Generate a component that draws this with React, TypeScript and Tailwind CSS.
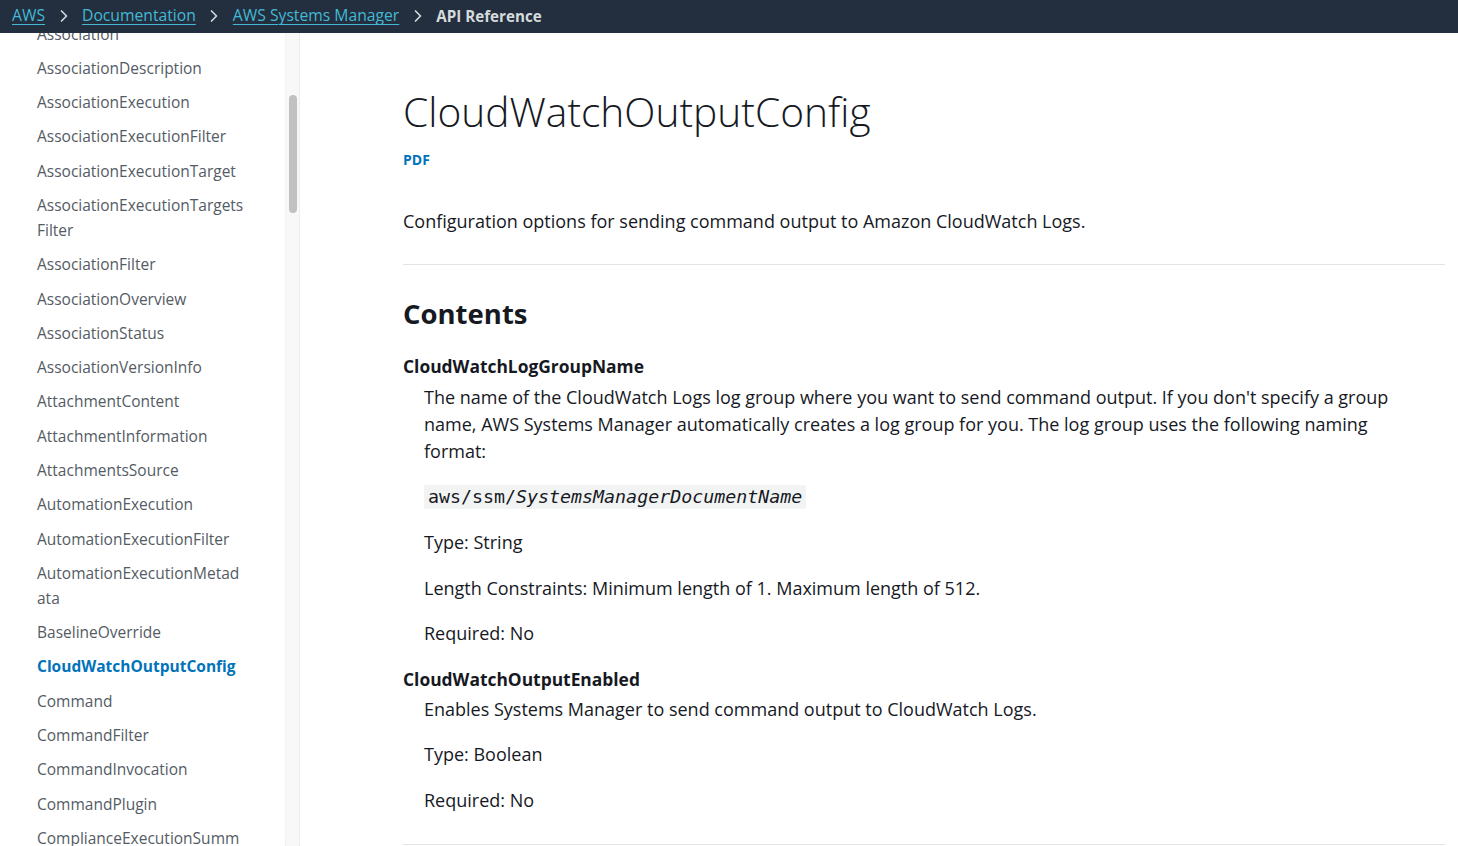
import { ChevronRight } from 'lucide-react';

const navItems: { label: React.ReactNode; active?: boolean }[] = [
  { label: 'AssociationDescription' },
  { label: 'AssociationExecution' },
  { label: 'AssociationExecutionFilter' },
  { label: 'AssociationExecutionTarget' },
  { label: <>AssociationExecutionTargets<br />Filter</> },
  { label: 'AssociationFilter' },
  { label: 'AssociationOverview' },
  { label: 'AssociationStatus' },
  { label: 'AssociationVersionInfo' },
  { label: 'AttachmentContent' },
  { label: 'AttachmentInformation' },
  { label: 'AttachmentsSource' },
  { label: 'AutomationExecution' },
  { label: 'AutomationExecutionFilter' },
  { label: <>AutomationExecutionMetad<br />ata</> },
  { label: 'BaselineOverride' },
  { label: 'CloudWatchOutputConfig', active: true },
  { label: 'Command' },
  { label: 'CommandFilter' },
  { label: 'CommandInvocation' },
  { label: 'CommandPlugin' },
  { label: 'ComplianceExecutionSumm' },
];

const crumbs = ['AWS', 'Documentation', 'AWS Systems Manager'];

function TopBar() {
  return (
    <header className="h-[33px] bg-[#232f3e] flex items-center pl-3 pb-[1px] text-[15.7px] shrink-0">
      {crumbs.map((c) => (
        <span key={c} className="flex items-center">
          <a className="text-[#44b9d6] underline underline-offset-[3px] decoration-1">{c}</a>
          <ChevronRight className="w-5 h-5 mx-[8.5px] text-[#d5dbdb]" strokeWidth={2} />
        </span>
      ))}
      <span className="font-bold text-[#d5dbdb] text-[15.2px]">API Reference</span>
    </header>
  );
}

function Sidebar() {
  return (
    <aside className="w-[300px] shrink-0 flex h-full overflow-hidden">
      <div className="flex-1 overflow-hidden">
        <ul className="pl-[37px] -mt-[16px] text-[15.5px] text-[#545b64]">
          <li className="leading-[25px] py-[4.65px]">Association</li>
          {navItems.map((item, i) => (
            <li
              key={i}
              className={
                item.active
                  ? 'leading-[25px] py-[4.65px] font-bold text-[#0073bb]'
                  : 'leading-[25px] py-[4.65px]'
              }
            >
              {item.label}
            </li>
          ))}
        </ul>
      </div>
      {/* scroll track */}
      <div className="w-[15px] bg-[#f8f8f8] border-l border-[#ececec] border-r border-r-[#e4e4e4] border-dotted">
        <div className="mt-[62px] mx-auto w-[8px] h-[118px] rounded-full bg-[#c1c1c1]" />
      </div>
    </aside>
  );
}

function Para({ children, className = '' }: { children: React.ReactNode; className?: string }) {
  return <p className={`leading-[27px] ${className}`}>{children}</p>;
}

export default function App() {
  return (
    <div
      className="w-[1458px] h-[846px] overflow-hidden flex flex-col bg-white"
      style={{ fontFamily: '"Open Sans", sans-serif' }}
    >
      <TopBar />
      <div className="flex flex-1 min-h-0">
        <Sidebar />
        <main className="flex-1 pl-[103px] pr-[13px] text-[#16191f] text-[18px]">
          <h1 className="mt-[53px] text-[40.7px] font-light leading-[50px]">CloudWatchOutputConfig</h1>
          <a className="block mt-[14px] text-[14px] font-bold text-[#0073bb] leading-[20px]">PDF</a>
          <Para className="mt-[38px]">
            Configuration options for sending command output to Amazon CloudWatch Logs.
          </Para>
          <hr className="mt-[29px] border-t border-[#e1e4e6]" />
          <h2 className="mt-[29px] text-[27.5px] font-bold leading-[40px]">Contents</h2>
          <dl className="mt-[19px]">
            <dt className="font-bold leading-[27px] text-[17.4px]">CloudWatchLogGroupName</dt>
            <dd className="pl-[21px] pr-[40px] mt-[4px]">
              <Para>
                The name of the CloudWatch Logs log group where you want to send command output. If you
                don't specify a group name, AWS Systems Manager automatically creates a log group for you.
                The log group uses the following naming format:
              </Para>
              <div className="mt-[20px] h-[24px] flex">
                <code
                  className="bg-[#f2f3f3] px-[4px] text-[18.3px] leading-[24px] rounded-[2px]"
                  style={{ fontFamily: '"DejaVu Sans Mono", monospace' }}
                >
                  aws/ssm/<i>SystemsManagerDocumentName</i>
                </code>
              </div>
              <Para className="mt-[19.5px]">Type: String</Para>
              <Para className="mt-[19px]">Length Constraints: Minimum length of 1. Maximum length of 512.</Para>
              <Para className="mt-[18px]">Required: No</Para>
            </dd>
            <dt className="mt-[19px] font-bold leading-[27px] text-[17.4px]">CloudWatchOutputEnabled</dt>
            <dd className="pl-[21px] pr-[40px] mt-[3px]">
              <Para>Enables Systems Manager to send command output to CloudWatch Logs.</Para>
              <Para className="mt-[18px]">Type: Boolean</Para>
              <Para className="mt-[19px]">Required: No</Para>
            </dd>
          </dl>
          <hr className="mt-[30px] border-t border-[#e1e4e6]" />
        </main>
      </div>
    </div>
  );
}
